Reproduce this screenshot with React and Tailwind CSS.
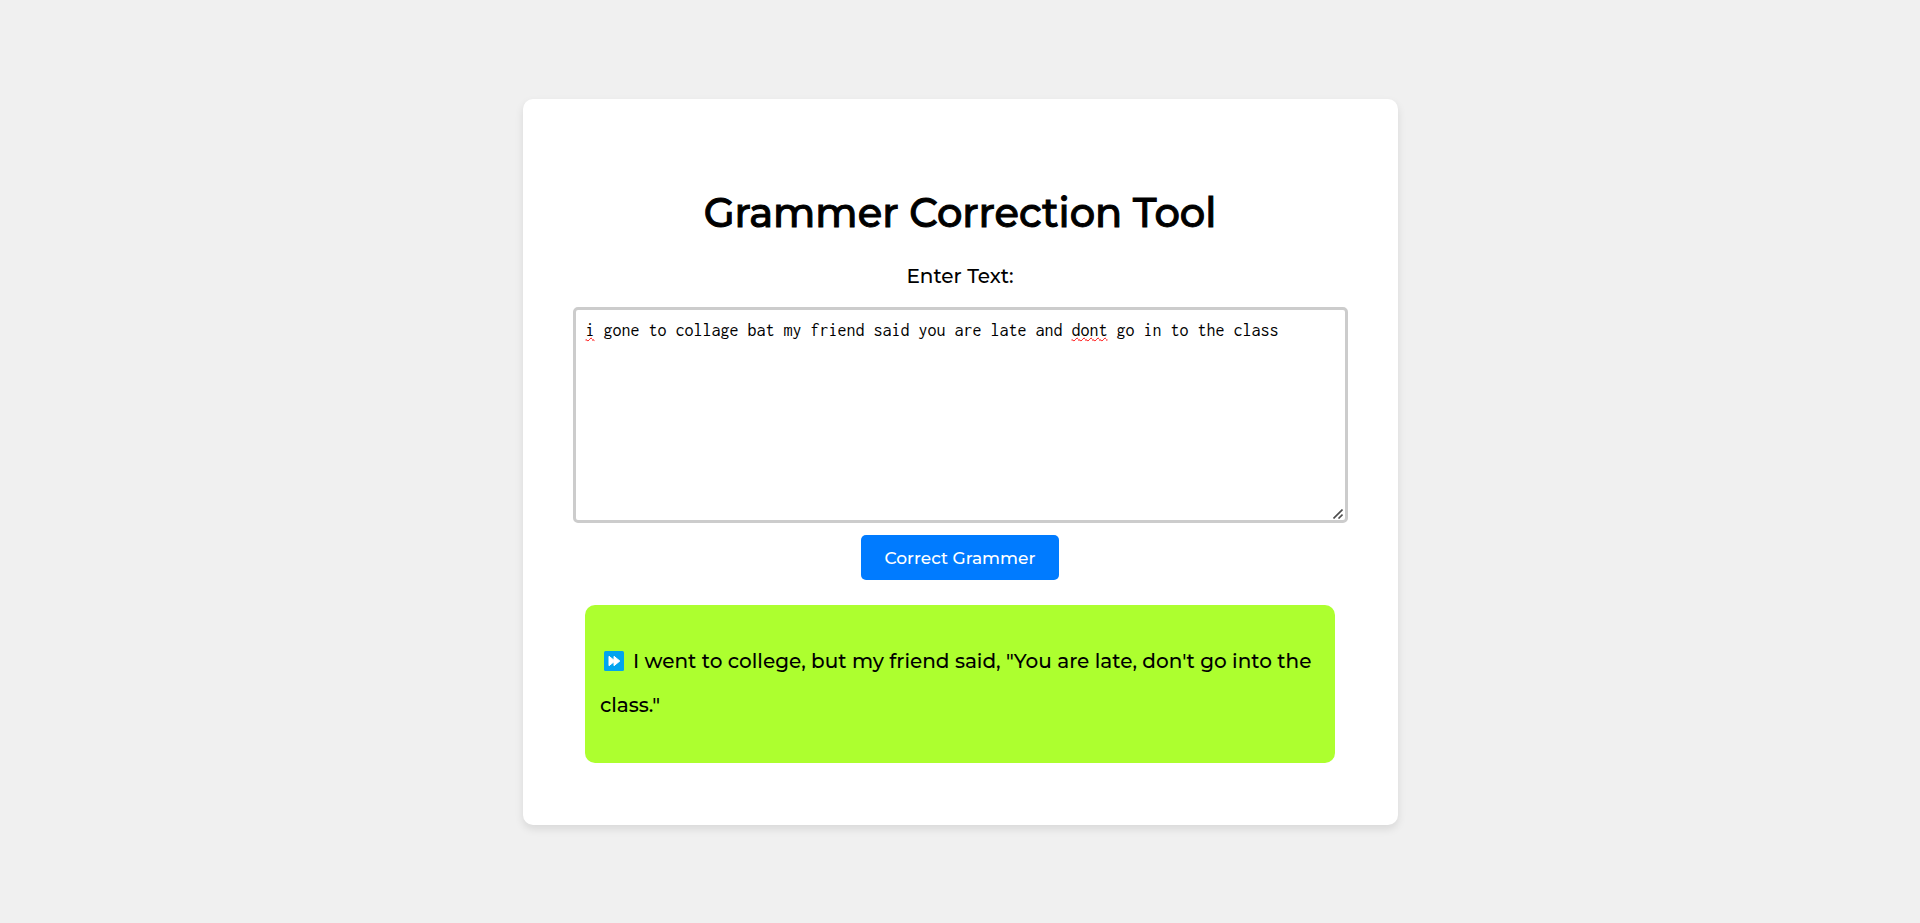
import { useState } from "react";

const MISSPELLED = ["i", "dont"];

function SpellingMarks({ text }) {
  return (
    <div
      aria-hidden="true"
      className="col-start-1 row-start-1 border-3 border-transparent p-[10px] text-left font-[Inconsolata,'Liberation_Mono',monospace] text-[18px] leading-5 whitespace-pre-wrap text-transparent select-none"
    >
      {text.split(/(\s+)/).map((word, index) => (
        <span
          key={index}
          className={
            MISSPELLED.includes(word)
              ? "underline decoration-[#ff0000] decoration-wavy decoration-1 underline-offset-1"
              : ""
          }
        >
          {word}
        </span>
      ))}
    </div>
  );
}

function ResizeGrip() {
  return (
    <svg
      viewBox="0 0 10 10"
      aria-hidden="true"
      className="pointer-events-none z-20 col-start-1 row-start-1 mr-[5px] mb-1 size-[10px] self-end justify-self-end"
    >
      <path d="M.5 9.500 9.500.5M5.500 9.500l4-4" stroke="#4d4d4d" strokeWidth="1.6" fill="none" />
    </svg>
  );
}

function FastForwardIcon() {
  return (
    <svg
      viewBox="0 0 20 20"
      className="mr-[9px] ml-1 inline-block size-5 align-[-3px]"
      role="img"
      aria-label="Result"
    >
      <rect width="20" height="20" rx="1.5" fill="#00a4ef" />
      <path
        d="M5 5.300 10 9.200V5.300L15.800 10 10 14.700V10.800L5 14.700z"
        fill="#fff"
        stroke="#fff"
        strokeWidth="1"
        strokeLinejoin="round"
      />
    </svg>
  );
}

export default function App() {
  const [text, setText] = useState(
    "i gone to collage bat my friend said you are late and dont go in to the class"
  );

  return (
    <main className="flex min-h-screen items-center justify-center bg-[#f0f0f0] font-[Montserrat,Inter,sans-serif] text-black">
      <section className="flex w-full max-w-[875px] flex-col items-center rounded-[10px] bg-white px-[50px] pt-[84px] pb-[62px] shadow-[0_4px_8px_rgba(0,0,0,0.1)]">
        <h1 className="text-center text-[40px] leading-[60px] font-medium [-webkit-text-stroke:1px_black]">
          Grammer Correction Tool
        </h1>
        <label htmlFor="source-text" className="mt-[17px] text-[20px] leading-8 font-medium">
          Enter Text:
        </label>
        <div className="mt-[15px] grid w-full">
          <SpellingMarks text={text} />
          <textarea
            id="source-text"
            spellCheck={false}
            value={text}
            onChange={(event) => setText(event.target.value)}
            className="z-10 col-start-1 row-start-1 h-[216px] w-full resize rounded-[5px] border-3 border-[#ccc] bg-transparent p-[10px] font-[Inconsolata,'Liberation_Mono',monospace] text-[18px] leading-5 outline-none [&::-webkit-resizer]:hidden"
          />
          <ResizeGrip />
        </div>
        <button
          type="button"
          className="mt-3 rounded-[5px] bg-[#007bff] px-6 pt-[11px] pb-[9px] text-[17px] leading-[25px] font-medium text-white"
        >
          Correct Grammer
        </button>
        <div className="mt-[25px] w-full max-w-[750px] rounded-[10px] bg-[#adff2f] px-[15px] pt-[34px] pb-9">
          <p className="text-[20px] leading-[44px] font-medium">
            <FastForwardIcon />
            I went to college, but my friend said, "You are late, don't go into the class."
          </p>
        </div>
      </section>
    </main>
  );
}
